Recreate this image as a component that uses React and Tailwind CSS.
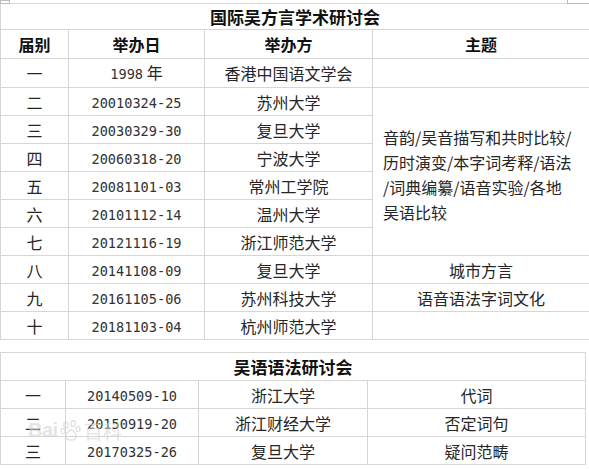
import React from 'react';

const rows = [
  ['一', '1998 年', '香港中国语文学会'],
  ['二', '20010324-25', '苏州大学'],
  ['三', '20030329-30', '复旦大学'],
  ['四', '20060318-20', '宁波大学'],
  ['五', '20081101-03', '常州工学院'],
  ['六', '20101112-14', '温州大学'],
  ['七', '20121116-19', '浙江师范大学'],
  ['八', '20141108-09', '复旦大学'],
  ['九', '20161105-06', '苏州科技大学'],
  ['十', '20181103-04', '杭州师范大学'],
];

const grammar = [
  ['一', '20140509-10', '浙江大学', '代词'],
  ['二', '20150919-20', '浙江财经大学', '否定词句'],
  ['三', '20170325-26', '复旦大学', '疑问范畴'],
];

const cell = 'border border-[#d6d6d6] p-0 text-center align-middle';

function DateText({ value }) {
  // dates drawn in a narrow mono face, like the SimSun digits
  const [num, rest] = value.split(' ');
  return (
    <span>
      <span className="font-['DejaVu_Sans_Mono',monospace] text-[13.6px] text-[#333]">{num}</span>
      {rest && <span> {rest}</span>}
    </span>
  );
}

function Watermark() {
  return (
    <div className="pointer-events-none absolute left-[28px] top-[419px] flex items-center gap-[2px] text-[#d4d4d4] opacity-60">
      <span className="font-['Liberation_Sans',sans-serif] text-[20px] font-bold tracking-tight">Bai</span>
      <svg width="22" height="22" viewBox="0 0 22 22" fill="none" stroke="#cfcfcf" strokeWidth="1.3">
        <ellipse cx="6" cy="6" rx="2.2" ry="3" />
        <ellipse cx="13" cy="4.5" rx="2.2" ry="3" />
        <ellipse cx="3" cy="12" rx="2" ry="2.6" />
        <ellipse cx="18" cy="10" rx="2" ry="2.6" />
        <path d="M6 18c0-4 3-7 5-7s5 3 5 7c0 2-2 3-5 3s-5-1-5-3z" />
      </svg>
      <span className="text-[19px]">百科</span>
    </div>
  );
}

export default function App() {
  return (
    <div className="relative h-[469px] w-[589px] overflow-hidden bg-white pt-[3px] font-['Noto_Sans_CJK_SC','Noto_Sans',sans-serif] text-[16px] leading-none text-[#262626]">
      <div className="absolute left-0 top-0 h-[4px] w-[10px] border border-[#bdbdbd] bg-white" />
      <div className="absolute right-0 top-0 h-[4px] w-[22px] border-b border-l border-[#bdbdbd]" />

      <table className="w-[589px] table-fixed border-collapse">
        <colgroup>
          <col className="w-[68px]" />
          <col className="w-[136px]" />
          <col className="w-[168px]" />
          <col className="w-[217px]" />
        </colgroup>
        <tbody>
          <tr className="h-[26px]">
            <td colSpan={4} className={`${cell} text-[17px] font-bold text-[#111]`}>国际吴方言学术研讨会</td>
          </tr>
          <tr className="h-[29px]">
            <td className={`${cell} font-bold text-[#111]`}>届别</td>
            <td className={`${cell} font-bold text-[#111]`}>举办日</td>
            <td className={`${cell} font-bold text-[#111]`}>举办方</td>
            <td className={`${cell} font-bold text-[#111]`}>主题</td>
          </tr>
          {rows.map(([n, d, host], i) => (
            <tr key={n} className={i === 0 ? 'h-[29px]' : 'h-[28px]'}>
              <td className={cell}>{n}</td>
              <td className={cell}><DateText value={d} /></td>
              <td className={cell}>{host}</td>
              {i === 0 && <td className={cell} />}
              {i === 1 && (
                <td rowSpan={6} className={`${cell} whitespace-nowrap pl-[10px] pt-[6px] text-left leading-[25px]`}>
                  音韵/吴音描写和共时比较/<br />
                  历时演变/本字词考释/语法<br />
                  /词典编纂/语音实验/各地<br />
                  吴语比较
                </td>
              )}
              {i === 7 && <td className={cell}>城市方言</td>}
              {i === 8 && <td className={cell}>语音语法字词文化</td>}
              {i === 9 && <td className={cell} />}
            </tr>
          ))}
        </tbody>
      </table>

      <table className="mt-[12px] w-[585px] table-fixed border-collapse">
        <colgroup>
          <col className="w-[65px]" />
          <col className="w-[133px]" />
          <col className="w-[169px]" />
          <col className="w-[218px]" />
        </colgroup>
        <tbody>
          <tr className="h-[28px]">
            <td colSpan={4} className={`${cell} text-[17px] font-bold text-[#111]`}>吴语语法研讨会</td>
          </tr>
          {grammar.map(([n, d, host, topic]) => (
            <tr key={n} className="h-[28px]">
              <td className={cell}>{n}</td>
              <td className={cell}><DateText value={d} /></td>
              <td className={cell}>{host}</td>
              <td className={cell}>{topic}</td>
            </tr>
          ))}
        </tbody>
      </table>

      <Watermark />
    </div>
  );
}
